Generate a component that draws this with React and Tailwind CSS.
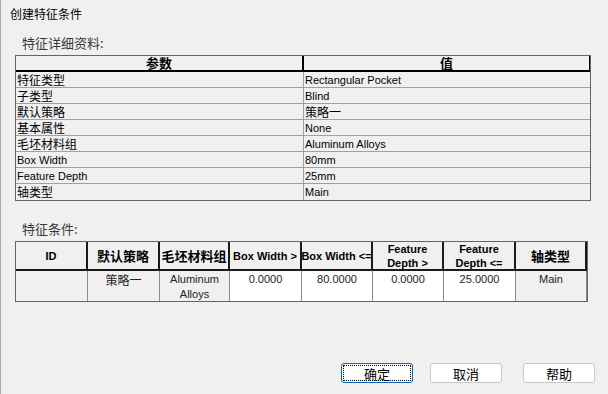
import React from 'react';

const cjk = '"Noto Sans CJK SC", "Liberation Sans", sans-serif';
const latin = '"Liberation Sans", "Noto Sans CJK SC", sans-serif';

const details = [
  ['特征类型', 'Rectangular Pocket'],
  ['子类型', 'Blind'],
  ['默认策略', '策略一'],
  ['基本属性', 'None'],
  ['毛坯材料组', 'Aluminum Alloys'],
  ['Box Width', '80mm'],
  ['Feature Depth', '25mm'],
  ['轴类型', 'Main'],
];

const isCjk = (s) => /[\u4e00-\u9fff]/.test(s);

const Cell = ({ text, className }) => (
  <div
    className={className + (isCjk(text) ? ' text-[12px]' : ' text-[11px]')}
    style={{ fontFamily: isCjk(text) ? cjk : latin }}
  >
    {text}
  </div>
);

const columns = [
  { head: 'ID', w: 'w-[72px]', val: '', white: false },
  { head: '默认策略', w: 'w-[72px]', val: '策略一', white: false },
  { head: '毛坯材料组', w: 'w-[70px]', val: 'Aluminum Alloys', white: false },
  { head: 'Box Width >', w: 'w-[72px]', val: '0.0000', white: true },
  { head: 'Box Width <=', w: 'w-[71px]', val: '80.0000', white: true },
  { head: 'Feature Depth >', w: 'w-[71px]', val: '0.0000', white: true },
  { head: 'Feature Depth <=', w: 'w-[72px]', val: '25.0000', white: true },
  { head: '轴类型', w: 'w-[71px]', val: 'Main', white: false },
];

const Button = ({ children, focused }) => (
  <button
    className={
      'w-[72px] h-[20px] rounded-[3px] bg-white text-[13px] leading-none text-black flex items-center justify-center ' +
      (focused ? 'border border-[#0067c0] outline outline-1 outline-dotted outline-black -outline-offset-[3px]' : 'border border-[#c8c8c8]')
    }
    style={{ fontFamily: cjk }}
  >
    {children}
  </button>
);

export default function App() {
  return (
    <div className="w-[608px] h-[394px] bg-[#f0f0f0] overflow-hidden border-l border-[#a8a8a8] flex flex-col" style={{ fontFamily: cjk }}>
      <div className="h-[28px] pl-[9px] pt-[6px] text-[12px] leading-[16px] text-black">创建特征条件</div>

      <div className="h-[27px] pl-[21px] pt-[7px] text-[13px] leading-[16px] text-[#3a3a3a]">特征详细资料:</div>

      {/* detail table */}
      <div className="ml-[14px] w-[576px] border border-[#646464] bg-[#f0f0f0]">
        <div className="flex h-[16px]">
          <div className="w-[288px] border-r-2 border-b-2 border-black text-[13px] font-bold leading-[14px] text-center">参数</div>
          <div className="flex-1 border-b-2 border-r border-black text-[13px] font-bold leading-[14px] text-center">值</div>
        </div>
        {details.map(([k, v], i) => (
          <div key={k} className={'flex h-[16px] ' + (i < details.length - 1 ? 'border-b border-[#a0a0a0]' : '')}>
            <Cell text={k} className="w-[288px] border-r border-[#a0a0a0] pl-[1px] leading-[16px] text-black" />
            <Cell text={v} className="flex-1 pl-[1px] leading-[16px] text-black" />
          </div>
        ))}
      </div>

      <div className="pl-[21px] pt-[20px] pb-[4px] text-[13px] leading-[16px] text-[#3a3a3a]">特征条件:</div>

      {/* condition table */}
      <div className="ml-[14px] w-[573px] border border-[#646464] flex flex-col">
        <div className="flex h-[29px]">
          {columns.map((c) => (
            <div
              key={c.head}
              className={c.w + ' border-r-2 border-b-2 border-[#1a1a1a] flex items-center justify-center text-center font-bold overflow-hidden px-[1px] ' + (isCjk(c.head) ? 'text-[13px]' : 'text-[11px] leading-[14px]')}
              style={{ fontFamily: isCjk(c.head) ? cjk : latin }}
            >
              <span className={c.head.startsWith('Box') ? 'whitespace-nowrap' : ''}>{c.head}</span>
            </div>
          ))}
        </div>
        <div className="flex h-[30px]">
          {columns.map((c) => (
            <div
              key={c.head}
              className={c.w + ' border-r border-[#8a8a8a] text-center pt-[1px] text-[#222] ' + (c.white ? 'bg-white ' : 'bg-[#f0f0f0] ') + (isCjk(c.val) ? 'text-[12px] leading-[15px]' : 'text-[11px] leading-[15px]')}
              style={{ fontFamily: isCjk(c.val) ? cjk : latin }}
            >
              {c.head === '毛坯材料组' ? (
                <>Aluminum<br />Alloys</>
              ) : (
                c.val
              )}
            </div>
          ))}
        </div>
      </div>

      <div className="flex mt-[61px] ml-[340px] gap-[17px]">
        <Button focused>确定</Button>
        <div className="mr-[4px]">
          <Button>取消</Button>
        </div>
        <Button>帮助</Button>
      </div>
    </div>
  );
}
